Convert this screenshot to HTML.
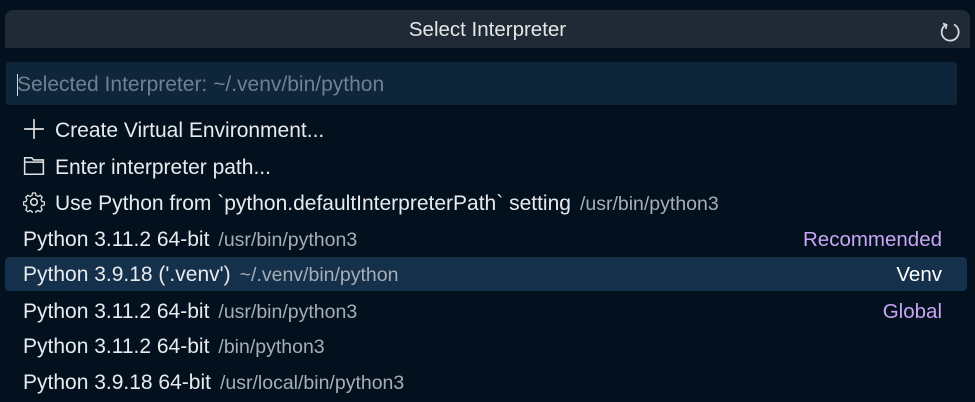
<!DOCTYPE html>
<html><head><meta charset="utf-8"><style>
html,body{margin:0;padding:0;width:975px;height:402px;overflow:hidden;background:#03111e;font-family:"Liberation Sans",sans-serif;}
.title{position:absolute;left:5px;top:10px;width:965px;height:38px;background:#1f2a36;border-radius:8px 8px 0 0;color:#e6e6e6;font-size:20.5px;line-height:40px;text-align:center;}
.ref{position:absolute;right:8px;top:8px;}
.input{position:absolute;left:6px;top:62px;width:951px;height:43px;background:#0f2539;border-radius:3px;}
.input span{position:absolute;left:11px;top:0;line-height:46px;font-size:21px;color:#6e8193;}
.caret{position:absolute;left:11px;top:12px;width:1px;height:22px;background:#cfd7df;}
.row{position:absolute;left:5px;width:962px;height:34px;line-height:36px;font-size:21px;color:#e8ebee;white-space:nowrap;}
.row .t{position:absolute;left:18px;}
.row .d{font-size:19.5px;color:#a6adb5;margin-left:9px;}
.row .l{position:absolute;right:25px;font-size:20.5px;color:#c8a6f5;}
.sel{background:#14304a;border-radius:4px;}
.ic{display:inline-block;vertical-align:middle;margin-right:10px;position:relative;top:-2px;}
</style></head><body>
<div class="title">Select Interpreter
<svg class="ref" width="24" height="26" viewBox="0 0 24 26"><path d="M7.5 7 A8.5 8.5 0 1 0 16 6.5" fill="none" stroke="#d8d8d8" stroke-width="1.8"/><path d="M5 5.5 L8.5 6.8 L7.8 11" fill="none" stroke="#d8d8d8" stroke-width="1.8"/></svg>
</div>
<div class="input"><span>Selected Interpreter: ~/.venv/bin/python</span><div class="caret"></div></div>
<div class="row" style="top:113px"><span class="t"><svg class="ic" width="22" height="22" viewBox="0 0 20 20"><path d="M10 1V19M1 10H19" stroke="#e0e0e0" stroke-width="1.5"/></svg>Create Virtual Environment...</span></div>
<div class="row" style="top:150px"><span class="t"><svg class="ic" width="22" height="22" viewBox="0 0 20 20"><path d="M1.5 2.5H8l1.5 2H18.5V17.5H1.5Z M1.5 6.5H18.5" fill="none" stroke="#e0e0e0" stroke-width="1.4"/></svg>Enter interpreter path...</span></div>
<div class="row" style="top:186px"><span class="t"><svg class="ic" width="22" height="22" viewBox="0 0 20 20"><circle cx="10" cy="10" r="3" fill="none" stroke="#e0e0e0" stroke-width="1.4"/><path d="M8.5 1.5h3l.5 2.5 2 1 2.3-1.2 2 2-1.2 2.3 1 2 2.5.5v3l-2.5.5-1 2 1.2 2.3-2 2-2.3-1.2-2 1-.5 2.5h-3l-.5-2.5-2-1-2.3 1.2-2-2 1.2-2.3-1-2-2.5-.5v-3l2.5-.5 1-2-1.2-2.3 2-2 2.3 1.2 2-1z" transform="scale(.9) translate(1.1 .5)" fill="none" stroke="#e0e0e0" stroke-width="1.3"/></svg>Use Python from `python.defaultInterpreterPath` setting<span class="d">/usr/bin/python3</span></span></div>
<div class="row" style="top:222px"><span class="t">Python 3.11.2 64-bit<span class="d">/usr/bin/python3</span></span><span class="l">Recommended</span></div>
<div class="row sel" style="top:257px"><span class="t">Python 3.9.18 ('.venv')<span class="d">~/.venv/bin/python</span></span><span class="l" style="color:#ffffff">Venv</span></div>
<div class="row" style="top:294px"><span class="t">Python 3.11.2 64-bit<span class="d">/usr/bin/python3</span></span><span class="l">Global</span></div>
<div class="row" style="top:329px"><span class="t">Python 3.11.2 64-bit<span class="d">/bin/python3</span></span></div>
<div class="row" style="top:365px"><span class="t">Python 3.9.18 64-bit<span class="d">/usr/local/bin/python3</span></span></div>
</body></html>
